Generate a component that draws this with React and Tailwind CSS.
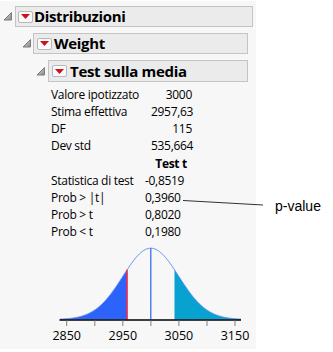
import React from "react";

function Disclose() {
  return (
    <svg width="10" height="9" viewBox="0 0 10 9" className="block">
      <defs>
        <linearGradient id="dg" x1="0" y1="0" x2="1" y2="1">
          <stop offset="0" stopColor="#d8d8d8" />
          <stop offset="1" stopColor="#8a8a8a" />
        </linearGradient>
      </defs>
      <path d="M8.5 0.5 L8.5 8 L1 8 Z" fill="url(#dg)" stroke="#7a7a7a" strokeWidth="1" strokeLinejoin="round" />
    </svg>
  );
}

function RedBtn() {
  return (
    <div className="w-[15px] h-[12px] border border-[#b8b8b8] bg-[#fbfbfb] rounded-[2px] flex items-center justify-center shrink-0">
      <svg width="9" height="5" viewBox="0 0 9 5" className="block">
        <path d="M0 0 L9 0 L4.5 5 Z" fill="#d0101a" />
      </svg>
    </div>
  );
}

function Chart() {
  const cx = 150.8, s = 27.9, base = 319.5, h = 71.3;
  const f = (x) => base - h * Math.exp(-0.5 * ((x - cx) / s) ** 2);
  const pts = (a, b) => {
    const arr = [];
    for (let x = a; x <= b + 0.001; x += 0.5) arr.push(`${x.toFixed(2)},${f(x).toFixed(2)}`);
    return arr;
  };
  const full = "M" + pts(60, 241).join(" L");
  const lx = 127.1, rx = 174.5;
  const left = `M60,${base} L` + pts(60, lx).join(" L") + ` L${lx},${base} Z`;
  const right = `M${rx},${base} L` + pts(rx, 241).join(" L") + ` L241,${base} Z`;
  const ticks = [66.7, 94.8, 122.8, 150.9, 178.9, 207, 235];
  const labels = [
    [66.7, "2850"],
    [122.8, "2950"],
    [178.9, "3050"],
    [235, "3150"],
  ];
  return (
    <svg width="256" height="108" viewBox="0 240 256 108" className="block">
      <path d={left} fill="#2c63fb" />
      <path d={right} fill="#07a2cf" />
      <path d={full} fill="none" stroke="#5c88f8" strokeWidth="1" />
      <line x1={lx} y1={f(lx)} x2={lx} y2={base} stroke="#ff2a3c" strokeWidth="1.5" />
      <line x1="150.8" y1={f(150.8)} x2="150.8" y2={base} stroke="#2a62f5" strokeWidth="1.2" />
      <line x1="59.5" y1="320" x2="241" y2="320" stroke="#000" strokeWidth="1.5" />
      {ticks.map((t) => (
        <line key={t} x1={t} y1="320.5" x2={t} y2="326" stroke="#808080" strokeWidth="1" />
      ))}
      {labels.map(([x, l]) => (
        <text key={l} x={x} y="339.5" textAnchor="middle" fontSize="12.5" fill="#000" fontFamily="'Open Sans', sans-serif">
          {l}
        </text>
      ))}
    </svg>
  );
}

export default function App() {
  const font = { fontFamily: "'Open Sans', 'Noto Sans', sans-serif" };
  return (
    <div className="relative w-[333px] h-[352px] bg-white flex" style={font}>
      <div className="w-[256px] h-[348px] mt-[1px] bg-[#f7f7f7] flex flex-col">
        {/* header 1 */}
        <div className="flex items-center h-[21px] mt-[5px]">
          <div className="w-[15px] pl-[3px] flex"><Disclose /></div>
          <div className="w-[238px] h-[21px] border border-[#c4c4c4] bg-[#ebebeb] flex items-center pl-[2px] gap-[1px]">
            <RedBtn />
            <span className="font-bold text-[15px] text-black leading-none tracking-[-0.35px]">Distribuzioni</span>
          </div>
        </div>
        {/* header 2 */}
        <div className="flex items-center h-[21px] mt-[6px]">
          <div className="w-[33px] pl-[22px] flex"><Disclose /></div>
          <div className="w-[215px] h-[21px] border border-[#c4c4c4] bg-[#ebebeb] flex items-center pl-[3px] gap-[2px]">
            <RedBtn />
            <span className="font-bold text-[15px] text-black leading-none tracking-[-0.3px]">Weight</span>
          </div>
        </div>
        {/* header 3 */}
        <div className="flex items-center h-[22px] mt-[6px]">
          <div className="w-[48px] pl-[36px] flex"><Disclose /></div>
          <div className="w-[200px] h-[22px] border border-[#c4c4c4] bg-[#ebebeb] flex items-center pl-[3px] gap-[3px]">
            <RedBtn />
            <span className="font-bold text-[15px] text-black leading-none tracking-[-0.3px]">Test sulla media</span>
          </div>
        </div>
        {/* tables */}
        <div className="ml-[51px] mt-[4px] text-[12px] text-black leading-[17px] tracking-[-0.3px]">
          <div className="grid grid-cols-[100px_41px]">
            <span>Valore ipotizzato</span><span className="text-right">3000</span>
            <span>Stima effettiva</span><span className="text-right">2957,63</span>
            <span>DF</span><span className="text-right">115</span>
            <span>Dev std</span><span className="text-right">535,664</span>
          </div>
          <div className="grid grid-cols-[94px_42px] mt-[1px]">
            <span></span><span className="text-right font-bold">Test t</span>
            <span>Statistica di test</span><span>-0,8519</span>
            <span>Prob &gt; |t|</span><span>0,3960</span>
            <span>Prob &gt; t</span><span>0,8020</span>
            <span>Prob &lt; t</span><span>0,1980</span>
          </div>
        </div>
        <Chart />
      </div>
      {/* annotation */}
      <svg className="absolute left-0 top-0" width="333" height="352" viewBox="0 0 333 352">
        <line x1="183" y1="200.5" x2="263" y2="205" stroke="#333" strokeWidth="1" />
      </svg>
      <span
        className="absolute left-[275px] top-[197px] text-[14px] leading-[18px] text-black"
        style={{ fontFamily: "'Liberation Sans', Arial, sans-serif" }}
      >
        p-value
      </span>
    </div>
  );
}
